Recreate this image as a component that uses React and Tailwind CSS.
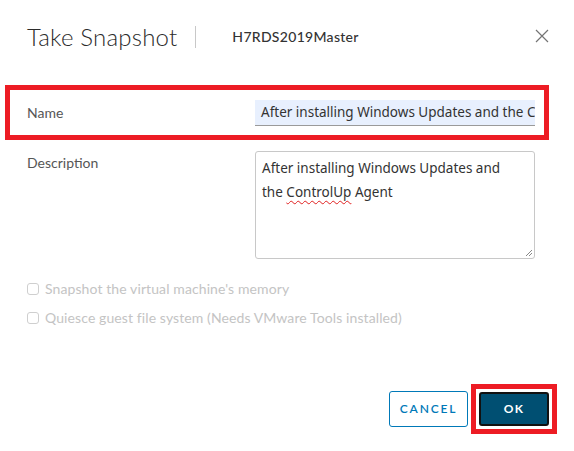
import React from "react";

const CheckRow = ({ label }) => (
  <label className="flex items-center gap-[6px] h-[29px] text-[14px] text-[#c4c4c4] tracking-[0.1px]">
    <span className="w-[12px] h-[12px] border border-[#cfcfcf] rounded-[3px] bg-white" />
    {label}
  </label>
);

const App = () => {
  return (
    <div
      className="w-[574px] h-[451px] bg-white flex flex-col"
      style={{ fontFamily: "Lato, 'Open Sans', sans-serif" }}
    >
      {/* header */}
      <div className="flex items-center h-[72px] pl-[27px] pr-[25px] pt-[1px]">
        <h2 className="text-[24px] font-light text-[#2b2b2b] tracking-[0.2px]">Take Snapshot</h2>
        <div className="w-px h-[22px] bg-[#c8c8c8] ml-[18px] mr-[36px]" />
        <span className="text-[14px] text-[#333] font-medium tracking-[0.3px]">H7RDS2019Master</span>
        <button className="ml-auto w-[14px] h-[14px] text-[#747474] -mt-[2px]">
          <svg viewBox="0 0 14 14" width="14" height="14" fill="none" stroke="currentColor" strokeWidth="1.2">
            <path d="M1 1 L13 13 M13 1 L1 13" />
          </svg>
        </button>
      </div>

      {/* name row (highlighted) */}
      <div className="w-[544px] ml-[5px] mt-[13px] border-[5px] border-[#ed1c24] h-[55px] flex items-center pl-[17px]">
        <span className="text-[14px] text-[#565656] w-[228px]">Name</span>
        <div
          className="w-[280px] h-[26px] bg-[#e8f0fe] border-b border-[#9a9a9a] overflow-hidden whitespace-nowrap pl-[6px] pt-[2px] text-[13.5px] text-[#333]"
          style={{ fontFamily: "'Noto Sans', sans-serif" }}
        >
          After installing Windows Updates and the ControlUp Agent
        </div>
      </div>

      {/* description */}
      <div className="flex pl-[27px] mt-[11px]">
        <span className="text-[14px] text-[#565656] w-[228px] pt-[1px]">Description</span>
        <div
          className="relative w-[280px] h-[108px] border border-[#c8c8c8] rounded-[3px] pl-[6px] pt-[4px] text-[13.5px] leading-[24px] text-[#333]"
          style={{ fontFamily: "'Noto Sans', sans-serif" }}
        >
          <p>After installing Windows Updates and</p>
          <p>
            the{" "}
            <span className="underline decoration-wavy decoration-[#e02020] decoration-[1px] underline-offset-[3px]">ControlUp</span>{" "}
            Agent
          </p>
          <svg className="absolute right-[1px] bottom-[1px]" width="9" height="9" viewBox="0 0 9 9" stroke="#888" strokeWidth="1">
            <path d="M8 2 L2 8 M8 5 L5 8" />
          </svg>
        </div>
      </div>

      {/* options */}
      <div className="flex flex-col pl-[27px] mt-[15px]">
        <CheckRow label="Snapshot the virtual machine's memory" />
        <CheckRow label="Quiesce guest file system (Needs VMware Tools installed)" />
      </div>

      {/* footer */}
      <div className="flex items-center justify-end mt-auto mb-[17px] pr-[17px]">
        <button className="w-[79px] h-[36px] border border-[#0079b8] rounded-[3px] text-[#0079b8] text-[12px] font-semibold tracking-[1.8px] mr-[3px]">
          CANCEL
        </button>
        <div className="border-[5px] border-[#ed1c24] p-[3px]">
          <button className="w-[70px] h-[34px] bg-[#004f72] border-2 border-[#111] rounded-[3px] text-white text-[12px] font-bold tracking-[1.2px]">
            OK
          </button>
        </div>
      </div>
    </div>
  );
};

export default App;
